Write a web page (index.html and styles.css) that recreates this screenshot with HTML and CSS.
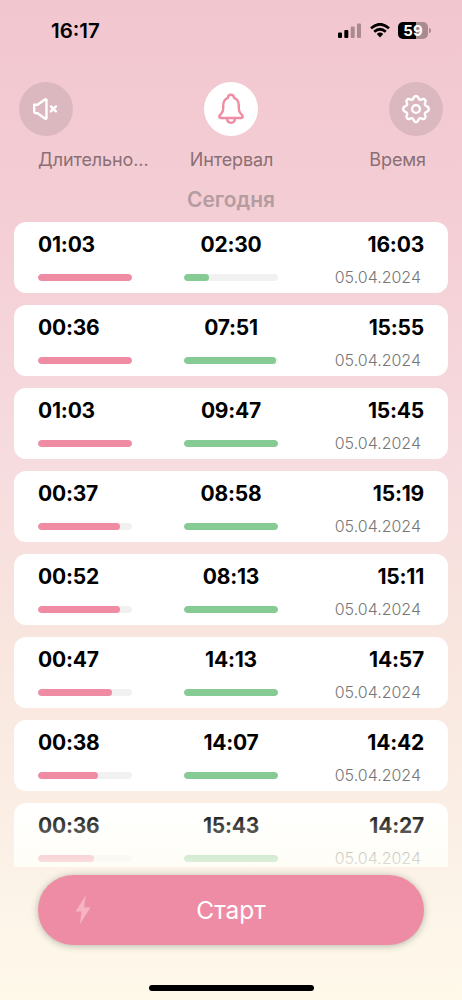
FILE: index.html
```
<!DOCTYPE html>
<html lang="ru">
<head>
<meta charset="utf-8">
<meta name="viewport" content="width=device-width, initial-scale=1">
<title>Интервалы</title>
<link rel="stylesheet" href="styles.css">
</head>
<body>
<div class="screen">
  <header class="status">
    <span class="clock">16:17</span>
    <div class="indicators">
      <svg class="signal" width="24" height="16" viewBox="0 0 24 16"><rect x="0" y="9.5" width="4" height="5.5" rx="1"/><rect x="6.3" y="7" width="4" height="8" rx="1"/><g opacity=".3"><rect x="12.7" y="3.5" width="4" height="11.5" rx="1"/><rect x="19" y="0.5" width="4" height="14.5" rx="1"/></g></svg>
      <svg class="wifi" width="20" height="15" viewBox="0 0 20 15"><g fill="none" stroke="#000" stroke-width="2.7"><path d="M1 5.2Q10-2.7 19 5.2"/><path d="M4.2 8.7Q10 3.8 15.8 8.7"/></g><path d="M6.8 11Q10 8.2 13.2 11L10 14.5Z"/></svg>
      <div class="battery"><span>59</span></div>
    </div>
  </header>
  <nav class="tools">
    <button class="tool" aria-label="Без звука"><svg width="32" height="32" viewBox="0 0 32 32"><path d="M4.2 11.8h3.4l7.3-5.3q1.6-.9 1.6.9v17.2q0 1.8-1.6.9l-7.3-5.3H5.9q-1.7 0-1.7-1.8z"/><path d="m20.9 13.4 5 5m0-5-5 5"/></svg></button>
    <button class="tool active" aria-label="Уведомления"><svg width="32" height="36" viewBox="0 0 32 36"><path d="M16 3.7c-1.9 0-3 1.2-3 3.1-3.2 1.2-4.8 4-4.8 7.6v3.1c0 2.3-.6 3.8-2.1 5.3l-1.2 1.3c-1.3 1.3-.7 2.9 1.1 2.9h20c1.8 0 2.4-1.6 1.1-2.9l-1.2-1.3c-1.5-1.5-2.1-3-2.1-5.3v-3.1c0-3.6-1.6-6.4-4.8-7.6 0-1.9-1.1-3.1-3-3.1zM12 27c.3 6.4 7.7 6.4 8 0"/></svg></button>
    <button class="tool" aria-label="Настройки"><svg width="32" height="32" viewBox="0 0 32 32"><circle cx="16" cy="16" r="3.9"/><path d="M13.6 5c1-2.8 3.8-2.8 4.8 0 .6 1.7 1.8 2.2 3.4 1.4 2.6-1.3 4.6.7 3.4 3.4-.8 1.6-.3 2.8 1.4 3.4 2.9 1 2.9 4.6 0 5.6-1.7.6-2.2 1.8-1.4 3.4 1.2 2.7-.8 4.7-3.4 3.4-1.6-.8-2.8-.3-3.4 1.4-1 2.8-3.8 2.8-4.8 0-.6-1.7-1.8-2.2-3.4-1.4-2.6 1.3-4.6-.7-3.4-3.4.8-1.6.3-2.8-1.4-3.4-2.9-1-2.9-4.6 0-5.6 1.7-.6 2.2-1.8 1.4-3.4-1.2-2.7.8-4.7 3.4-3.4 1.6.8 2.8.3 3.4-1.4z"/></svg></button>
  </nav>
  <div class="headings"><span>Длительно...</span><span>Интервал</span><span>Время</span></div>
  <h1 class="day">Сегодня</h1>
  <main class="list" id="list"></main>
  <footer class="dock">
    <button class="start"><svg class="bolt" width="16" height="30" viewBox="0 0 16 30"><path d="M10.7.5.5 16.5h6L4.8 29.5 15.5 12.5H9z"/></svg><span>Старт</span></button>
    <div class="home"></div>
  </footer>
</div>
<script src="script.js"></script>
</body>
</html>
```
FILE: styles.css
```
* { box-sizing: border-box; }
body { margin: 0; font-family: Inter, "Liberation Sans", sans-serif; color: #000; }
button { border: 0; padding: 0; font: inherit; }
.screen { width: 462px; height: 1000px; overflow: hidden; display: flex; flex-direction: column; background: linear-gradient(#f2c6cf 0%, #f4ced5 22%, #f6dcdf 46%, #f8e5de 63%, #fbf0e6 84%, #fdf6e9 94%, #fff9ea 100%); }
.status { height: 82px; flex: none; display: flex; justify-content: space-between; align-items: flex-start; padding: 18px 34px 0 51px; }
.clock { font-size: 20.5px; line-height: 26px; font-weight: 600; }
.indicators { display: flex; align-items: center; gap: 8px; padding-top: 4px; }
.battery { position: relative; width: 30px; height: 17px; border-radius: 5px; background: linear-gradient(90deg, #000 59%, #a88a91 59%); color: #fff; font-size: 15px; line-height: 17px; font-weight: 700; text-align: center; }
.battery::after { content: ""; position: absolute; left: 31px; top: 6px; width: 2px; height: 5px; border-radius: 0 2px 2px 0; background: #a88a91; }
.tools { height: 54px; flex: none; display: flex; justify-content: space-between; padding: 0 19px; }
.tool { width: 54px; height: 54px; border-radius: 50%; background: #dbb8bf; display: grid; place-items: center; }
.tool svg { fill: none; stroke: #fff; stroke-width: 2.4; stroke-linecap: round; stroke-linejoin: round; }
.tool.active { background: #fff; }
.tool.active svg { stroke: #ef8ba3; }
.headings { height: 48px; flex: none; display: grid; grid-template-columns: 112px 1fr 112px; padding: 12px 36px 0 37px; font-size: 18px; line-height: 24px; letter-spacing: -.1px; color: #8a6f75; text-align: center; white-space: nowrap; }
.headings span:first-child { text-align: left; padding-left: 1px; }
.headings span:last-child { text-align: right; }
.day { margin: 0; height: 38px; flex: none; text-align: center; font-size: 21px; line-height: 31px; font-weight: 600; color: #b59ca1; }
.list { height: 645px; flex: none; overflow: hidden; position: relative; display: flex; flex-direction: column; gap: 12px; padding: 0 14px; }
.list::after { content: ""; position: absolute; left: 14px; right: 14px; bottom: 0; height: 62px; background: linear-gradient(rgba(254,253,244,0), rgba(254,253,244,.78)); }
.card { height: 71px; flex: none; display: grid; grid-template-columns: 94px 1fr 94px; grid-template-rows: 30px 20px; row-gap: 7px; padding: 8px 24px 6px; border-radius: 12px; background: #fff; }
.value { font-size: 21px; line-height: 30px; font-weight: 700; letter-spacing: -.2px; }
.value.mid { text-align: center; }
.value.end { text-align: right; }
.track { align-self: center; width: 94px; height: 7px; border-radius: 4px; background: #f1f1f2; overflow: hidden; }
.track.mid { justify-self: center; }
.fill { height: 100%; border-radius: 4px; background: #ef8ca4; }
.fill.green { background: #85cb93; }
.date { text-align: right; font-size: 16px; line-height: 20px; color: #777; font-weight: 300; padding-right: 3px; }
.dock { height: 133px; flex: none; display: flex; flex-direction: column; align-items: center; justify-content: space-between; padding: 8px 38px 9px; position: relative; }
.start { width: 100%; height: 70px; border-radius: 35px; background: #ef8ca5; box-shadow: 0 1px 7px rgba(70,90,70,.4); color: #fff; font-size: 24.5px; line-height: 30px; display: grid; grid-template-columns: 90px 1fr 90px; align-items: center; }
.bolt { justify-self: center; fill: #f5b3c3; }
.home { width: 165px; height: 6px; border-radius: 3px; background: #000; }
```
FILE: script.js
```
const entries = [
  ["01:03", 94, "02:30", 25, "16:03"],
  ["00:36", 94, "07:51", 92, "15:55"],
  ["01:03", 94, "09:47", 94, "15:45"],
  ["00:37", 82, "08:58", 94, "15:19"],
  ["00:52", 82, "08:13", 94, "15:11"],
  ["00:47", 74, "14:13", 94, "14:57"],
  ["00:38", 60, "14:07", 94, "14:42"],
  ["00:36", 56, "15:43", 94, "14:27"]
];
document.getElementById("list").innerHTML = entries.map(([length, a, interval, b, time]) => `
  <article class="card">
    <span class="value">${length}</span><span class="value mid">${interval}</span><span class="value end">${time}</span>
    <div class="track"><div class="fill" style="width:${a}px"></div></div>
    <div class="track mid"><div class="fill green" style="width:${b}px"></div></div>
    <span class="date">05.04.2024</span>
  </article>`).join("");
```
